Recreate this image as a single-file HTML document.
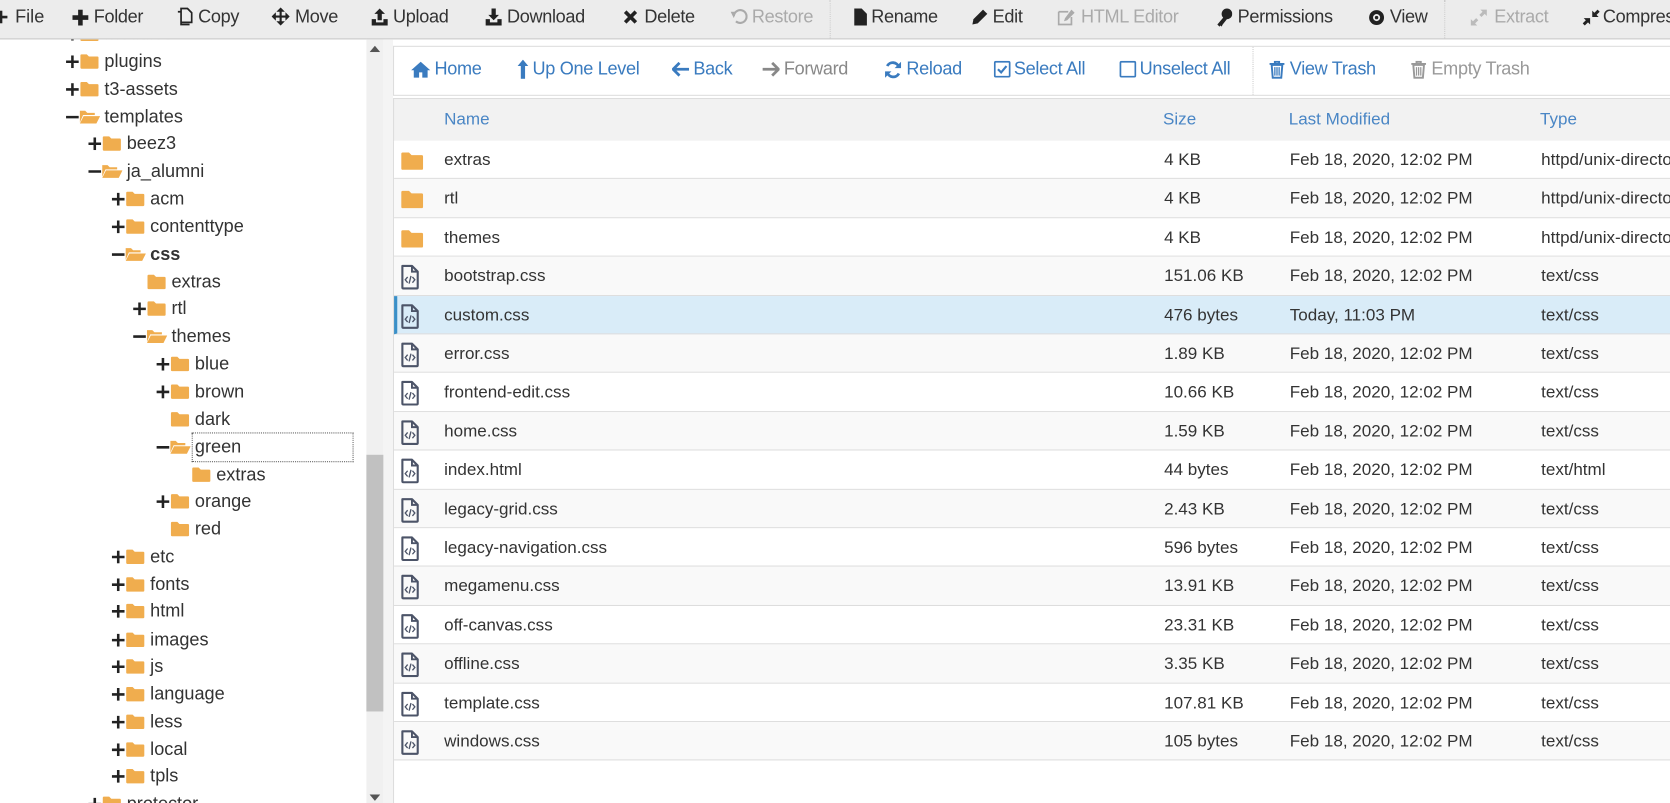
<!DOCTYPE html>
<html><head><meta charset="utf-8">
<style>
*{margin:0;padding:0;box-sizing:border-box}
html,body{width:1670px;height:803px;overflow:hidden;background:#fff}
#w{position:absolute;left:0;top:0;width:1568px;height:754px;transform:scale(1.06505);transform-origin:0 0;font-family:"Liberation Sans",sans-serif;overflow:hidden}
.a{position:absolute;white-space:nowrap}
#tb{position:absolute;left:0;top:0;width:1568px;height:37px;background:#ececec;border-bottom:1px solid #c9c9c9}
.ti{position:absolute;top:6px;font-size:17px;color:#333;letter-spacing:-0.3px;white-space:nowrap}
.ti svg{position:absolute;left:-20px;top:2px}
.dis{color:#aaa}
.sep{position:absolute;top:0;width:0;height:36px;border-left:1px dotted #ccc}
.tr{position:absolute;font-size:17px;color:#333;height:24px;line-height:26px;white-space:nowrap}
.tr svg{position:absolute;top:5px}
.nav{position:absolute;top:55px;font-size:17px;color:#3a7bbf;letter-spacing:-0.3px;white-space:nowrap}
.nav svg{position:absolute;left:-20px;top:2px}
.row{position:absolute;left:370px;width:1200px;height:36.4px;border-bottom:1px solid #ddd;font-size:16px;color:#333;white-space:nowrap}
.row span{position:absolute;top:10px;white-space:nowrap}
.row svg{position:absolute;left:6px;top:7px}
</style></head><body><div id="w">

<!-- toolbar -->
<div id="tb">
<div class="ti" style="left:12px"><svg width="14" height="14" viewBox="0 0 14 14" style="left:-11px"><path d="M5 0h4v5h5v4H9v5H5V9H0V5h5z" fill="#222"/></svg>File</div>
<div class="ti" style="left:88px"><svg width="15" height="15" viewBox="0 0 14 14"><path d="M5 0h4v5h5v4H9v5H5V9H0V5h5z" fill="#222"/></svg>Folder</div>
<div class="ti" style="left:186px"><svg width="15" height="17" viewBox="0 0 15 17"><path d="M4 1h6l4 4v9H4z M1 4h3v12h8" fill="none" stroke="#222" stroke-width="1.6"/></svg>Copy</div>
<div class="ti" style="left:277px"><svg width="17" height="17" viewBox="0 0 17 17" style="left:-22px"><path d="M8.5 0l4 4h-3v3.5h3.5v-3l4 4-4 4v-3H9.5V13h3l-4 4-4-4h3V9.5H4v3l-4-4 4-4v3h3.5V4h-3z" fill="#222"/></svg>Move</div>
<div class="ti" style="left:369px"><svg width="17" height="17" viewBox="0 0 17 17" style="left:-21px"><path d="M8.5 0l5 5h-3v6h-4V5h-3z M1 10h4v3h7v-3h4v6H1z" fill="#222"/></svg>Upload</div>
<div class="ti" style="left:476px"><svg width="17" height="17" viewBox="0 0 17 17" style="left:-21px"><path d="M6.5 0h4v6h3l-5 5-5-5h3z M1 10h4v3h7v-3h4v6H1z" fill="#222"/></svg>Download</div>
<div class="ti" style="left:605px"><svg width="14" height="14" viewBox="0 0 14 14" style="top:3px"><path d="M2 2l10 10M12 2L2 12" stroke="#222" stroke-width="3.4"/></svg>Delete</div>
<div class="ti dis" style="left:706px"><svg width="16" height="16" viewBox="0 0 16 16"><path d="M3 7a6 6 0 1 1 2 5" fill="none" stroke="#aaa" stroke-width="2"/><path d="M0 3l5 0 -2 6z" fill="#aaa"/></svg>Restore</div>
<div class="sep" style="left:779px"></div>
<div class="ti" style="left:818px"><svg width="12" height="16" viewBox="0 0 12 16" style="left:-16px"><path d="M0 0h7l5 5v11H0z" fill="#222"/></svg>Rename</div>
<div class="ti" style="left:932px"><svg width="16" height="16" viewBox="0 0 16 16"><path d="M11 1l4 4-9 9-5 1 1-5z" fill="#222"/></svg>Edit</div>
<div class="ti dis" style="left:1015px"><svg width="17" height="16" viewBox="0 0 17 16" style="left:-22px"><path d="M1 3h9M1 3v12h12V8" fill="none" stroke="#aaa" stroke-width="1.6"/><path d="M13 1l3 3-7 7-3 1 1-3z" fill="#aaa"/></svg>HTML Editor</div>
<div class="ti" style="left:1162px"><svg width="15" height="17" viewBox="0 0 15 17"><circle cx="10" cy="5" r="5" fill="#222"/><path d="M7 8l-6 7 2 2 1-1 1 1 1-2 4-5z" fill="#222"/></svg>Permissions</div>
<div class="ti" style="left:1305px"><svg width="17" height="17" viewBox="0 0 17 17" style="left:-21px"><circle cx="8.5" cy="8.5" r="7" fill="#222"/><circle cx="8.5" cy="8.5" r="3.3" fill="#ececec"/><circle cx="8.5" cy="8.5" r="1.6" fill="#222"/></svg>View</div>
<div class="sep" style="left:1356px"></div>
<div class="ti dis" style="left:1403px"><svg width="17" height="17" viewBox="0 0 17 17" style="left:-23px"><path d="M10 1h6v6l-2-2-3 3-2-2 3-3z M1 16v-6l2 2 3-3 2 2-3 3 2 2z" fill="#bbb"/></svg>Extract</div>
<div class="ti" style="left:1505px"><svg width="16" height="17" viewBox="0 0 16 17" style="left:-19px"><path d="M9 8V2l2 2 3-3 2 2-3 3 2 2z M7 9v6l-2-2-3 3-2-2 3-3-2-2z" fill="#222"/></svg>Compress</div>
</div>

<!-- left tree -->
<div class="a" style="left:344px;top:37px;width:16px;height:717px;background:#f0f0f0"></div>
<div class="a" style="left:344px;top:427px;width:16px;height:241px;background:#c1c1c1"></div>
<svg class="a" style="left:347px;top:43px" width="10" height="6"><path d="M0 6L5 0 10 6z" fill="#555"/></svg>
<svg class="a" style="left:347px;top:746px" width="10" height="6"><path d="M0 0L5 6 10 0z" fill="#555"/></svg>
<div class="a" style="left:360px;top:37px;width:9px;height:717px;background:#f4f4f4"></div>

<div class="a" style="left:180px;top:406px;width:152px;height:28px;border:1px dotted #666"></div>

<svg width="0" height="0" style="position:absolute">
<defs>
<symbol id="fc" viewBox="0 0 18 15"><path d="M1.5 1h5l2 2h8a1 1 0 0 1 1 1v9.5a1 1 0 0 1-1 1h-15a1 1 0 0 1-1-1v-11.5a1 1 0 0 1 1-1z" fill="#f0ad4e"/></symbol>
<symbol id="fo" viewBox="0 0 20 15"><path d="M1 2h5l2 2h7v2H4L1 13z" fill="#f0ad4e"/><path d="M4.5 7H20l-3.5 7H1z" fill="#f0ad4e"/></symbol>
<symbol id="pl" viewBox="0 0 12 12"><path d="M4.8 0h2.4v4.8H12v2.4H7.2V12H4.8V7.2H0V4.8h4.8z" fill="#222"/></symbol>
<symbol id="mi" viewBox="0 0 12 12"><path d="M0 4.8h12v2.4H0z" fill="#222"/></symbol>
<symbol id="fi" viewBox="0 0 20 26"><path d="M2 1.5h10l6 6V24a1 1 0 0 1-1 1H3a1 1 0 0 1-1-1z" fill="none" stroke="#4c5468" stroke-width="2.2" stroke-linejoin="round"/><path d="M12 1.5v6h6" fill="none" stroke="#4c5468" stroke-width="2"/><path d="M7.5 13l-2.5 3 2.5 3M12.5 13l2.5 3-2.5 3M11 12l-2 8" fill="none" stroke="#4c5468" stroke-width="1.4"/></symbol>
</defs></svg>

<div class="tr" style="left:98px;top:19px">modules<svg style="left:-23px" width="18" height="15"><use href="#fc"/></svg><svg style="left:-36px;top:7px" width="12" height="12"><use href="#pl"/></svg></div>
<div class="tr" style="left:98px;top:45px">plugins<svg style="left:-23px" width="18" height="15"><use href="#fc"/></svg><svg style="left:-36px;top:7px" width="12" height="12"><use href="#pl"/></svg></div>
<div class="tr" style="left:98px;top:71px">t3-assets<svg style="left:-23px" width="18" height="15"><use href="#fc"/></svg><svg style="left:-36px;top:7px" width="12" height="12"><use href="#pl"/></svg></div>
<div class="tr" style="left:98px;top:97px">templates<svg style="left:-24px" width="20" height="15"><use href="#fo"/></svg><svg style="left:-36px;top:7px" width="12" height="12"><use href="#mi"/></svg></div>
<div class="tr" style="left:119px;top:122px">beez3<svg style="left:-23px" width="18" height="15"><use href="#fc"/></svg><svg style="left:-36px;top:7px" width="12" height="12"><use href="#pl"/></svg></div>
<div class="tr" style="left:119px;top:148px">ja_alumni<svg style="left:-24px" width="20" height="15"><use href="#fo"/></svg><svg style="left:-36px;top:7px" width="12" height="12"><use href="#mi"/></svg></div>
<div class="tr" style="left:141px;top:174px">acm<svg style="left:-23px" width="18" height="15"><use href="#fc"/></svg><svg style="left:-36px;top:7px" width="12" height="12"><use href="#pl"/></svg></div>
<div class="tr" style="left:141px;top:200px">contenttype<svg style="left:-23px" width="18" height="15"><use href="#fc"/></svg><svg style="left:-36px;top:7px" width="12" height="12"><use href="#pl"/></svg></div>
<div class="tr" style="left:141px;top:226px;font-weight:bold">css<svg style="left:-24px" width="20" height="15"><use href="#fo"/></svg><svg style="left:-36px;top:7px" width="12" height="12"><use href="#mi"/></svg></div>
<div class="tr" style="left:161px;top:252px">extras<svg style="left:-23px" width="18" height="15"><use href="#fc"/></svg></div>
<div class="tr" style="left:161px;top:277px">rtl<svg style="left:-23px" width="18" height="15"><use href="#fc"/></svg><svg style="left:-36px;top:7px" width="12" height="12"><use href="#pl"/></svg></div>
<div class="tr" style="left:161px;top:303px">themes<svg style="left:-24px" width="20" height="15"><use href="#fo"/></svg><svg style="left:-36px;top:7px" width="12" height="12"><use href="#mi"/></svg></div>
<div class="tr" style="left:183px;top:329px">blue<svg style="left:-23px" width="18" height="15"><use href="#fc"/></svg><svg style="left:-36px;top:7px" width="12" height="12"><use href="#pl"/></svg></div>
<div class="tr" style="left:183px;top:355px">brown<svg style="left:-23px" width="18" height="15"><use href="#fc"/></svg><svg style="left:-36px;top:7px" width="12" height="12"><use href="#pl"/></svg></div>
<div class="tr" style="left:183px;top:381px">dark<svg style="left:-23px" width="18" height="15"><use href="#fc"/></svg></div>
<div class="tr" style="left:183px;top:407px">green<svg style="left:-24px" width="20" height="15"><use href="#fo"/></svg><svg style="left:-36px;top:7px" width="12" height="12"><use href="#mi"/></svg></div>
<div class="tr" style="left:203px;top:433px">extras<svg style="left:-23px" width="18" height="15"><use href="#fc"/></svg></div>
<div class="tr" style="left:183px;top:458px">orange<svg style="left:-23px" width="18" height="15"><use href="#fc"/></svg><svg style="left:-36px;top:7px" width="12" height="12"><use href="#pl"/></svg></div>
<div class="tr" style="left:183px;top:484px">red<svg style="left:-23px" width="18" height="15"><use href="#fc"/></svg></div>
<div class="tr" style="left:141px;top:510px">etc<svg style="left:-23px" width="18" height="15"><use href="#fc"/></svg><svg style="left:-36px;top:7px" width="12" height="12"><use href="#pl"/></svg></div>
<div class="tr" style="left:141px;top:536px">fonts<svg style="left:-23px" width="18" height="15"><use href="#fc"/></svg><svg style="left:-36px;top:7px" width="12" height="12"><use href="#pl"/></svg></div>
<div class="tr" style="left:141px;top:561px">html<svg style="left:-23px" width="18" height="15"><use href="#fc"/></svg><svg style="left:-36px;top:7px" width="12" height="12"><use href="#pl"/></svg></div>
<div class="tr" style="left:141px;top:588px">images<svg style="left:-23px" width="18" height="15"><use href="#fc"/></svg><svg style="left:-36px;top:7px" width="12" height="12"><use href="#pl"/></svg></div>
<div class="tr" style="left:141px;top:613px">js<svg style="left:-23px" width="18" height="15"><use href="#fc"/></svg><svg style="left:-36px;top:7px" width="12" height="12"><use href="#pl"/></svg></div>
<div class="tr" style="left:141px;top:639px">language<svg style="left:-23px" width="18" height="15"><use href="#fc"/></svg><svg style="left:-36px;top:7px" width="12" height="12"><use href="#pl"/></svg></div>
<div class="tr" style="left:141px;top:665px">less<svg style="left:-23px" width="18" height="15"><use href="#fc"/></svg><svg style="left:-36px;top:7px" width="12" height="12"><use href="#pl"/></svg></div>
<div class="tr" style="left:141px;top:691px">local<svg style="left:-23px" width="18" height="15"><use href="#fc"/></svg><svg style="left:-36px;top:7px" width="12" height="12"><use href="#pl"/></svg></div>
<div class="tr" style="left:141px;top:716px">tpls<svg style="left:-23px" width="18" height="15"><use href="#fc"/></svg><svg style="left:-36px;top:7px" width="12" height="12"><use href="#pl"/></svg></div>
<div class="tr" style="left:119px;top:742px">protector<svg style="left:-23px" width="18" height="15"><use href="#fc"/></svg><svg style="left:-36px;top:7px" width="12" height="12"><use href="#pl"/></svg></div>
<!-- re-cover top under toolbar -->
<div class="a" style="left:0;top:0;width:344px;height:37px;background:#ececec;border-bottom:1px solid #c9c9c9"></div>
<div class="a" style="left:0;top:6px;font-size:17px;color:#333;">&nbsp;&nbsp;&nbsp;File</div>
<svg class="a" style="left:-5px;top:10px" width="12" height="12"><use href="#pl"/></svg>
<div class="a" style="left:88px;top:6px;font-size:17px;color:#333;letter-spacing:-0.3px">Folder</div>
<svg class="a" style="left:68px;top:9px" width="15" height="15" viewBox="0 0 14 14"><path d="M5 0h4v5h5v4H9v5H5V9H0V5h5z" fill="#222"/></svg>
<div class="a" style="left:186px;top:6px;font-size:17px;color:#333;letter-spacing:-0.3px">Copy</div>
<svg class="a" style="left:166px;top:7px" width="15" height="17" viewBox="0 0 15 17"><path d="M4 1h6l4 4v9H4z M1 4h3v12h8" fill="none" stroke="#222" stroke-width="1.6"/></svg>
<div class="a" style="left:277px;top:6px;font-size:17px;color:#333;letter-spacing:-0.3px">Move</div>
<svg class="a" style="left:255px;top:7px" width="17" height="17" viewBox="0 0 17 17"><path d="M8.5 0l4 4h-3v3.5h3.5v-3l4 4-4 4v-3H9.5V13h3l-4 4-4-4h3V9.5H4v3l-4-4 4-4v3h3.5V4h-3z" fill="#222"/></svg>

<!-- nav bar -->
<div class="a" style="left:369px;top:43px;width:1210px;height:47px;border:1px solid #ddd;background:#fff"></div>
<div class="a" style="left:1176px;top:44px;height:45px;border-left:1px dotted #ccc"></div>
<div class="nav" style="left:408px"><svg width="18" height="16" viewBox="0 0 18 16" style="left:-22px"><path d="M9 1L0 9h2.5v7h5v-5h3v5h5V9H18z" fill="#3a7bbf"/></svg>Home</div>
<div class="nav" style="left:500px"><svg width="12" height="18" viewBox="0 0 12 18" style="left:-15px;top:1px"><path d="M6 0l5 6H8v12H4V6H1z" fill="#3a7bbf"/></svg>Up One Level</div>
<div class="nav" style="left:651px"><svg width="16" height="14" viewBox="0 0 16 14" style="top:3px"><path d="M7 1L1 7l6 6M1 7h15" fill="none" stroke="#3a7bbf" stroke-width="2.6"/></svg>Back</div>
<div class="nav" style="left:736px;color:#888"><svg width="16" height="14" viewBox="0 0 16 14" style="top:3px"><path d="M9 1l6 6-6 6M15 7H0" fill="none" stroke="#888" stroke-width="2.6"/></svg>Forward</div>
<div class="nav" style="left:851px"><svg width="17" height="17" viewBox="0 0 17 17" style="left:-21px"><path d="M14 6A6 6 0 0 0 3 5M3 11a6 6 0 0 0 11 1" fill="none" stroke="#3a7bbf" stroke-width="2.6"/><path d="M16 1v6h-6z M1 16v-6h6z" fill="#3a7bbf"/></svg>Reload</div>
<div class="nav" style="left:952px"><svg width="16" height="16" viewBox="0 0 16 16" style="left:-19px"><rect x="1" y="1" width="14" height="14" rx="1" fill="none" stroke="#3a7bbf" stroke-width="1.6"/><path d="M4 8l3 3 5-6" fill="none" stroke="#3a7bbf" stroke-width="2"/></svg>Select All</div>
<div class="nav" style="left:1070px"><svg width="16" height="16" viewBox="0 0 16 16" style="left:-19px"><rect x="1" y="1" width="14" height="14" rx="1" fill="none" stroke="#3a7bbf" stroke-width="1.6"/></svg>Unselect All</div>
<div class="nav" style="left:1211px"><svg width="14" height="17" viewBox="0 0 14 17" style="left:-19px"><path d="M0 3h14M5 3V1h4v2M2 4h10l-1 12H3z" fill="none" stroke="#3a7bbf" stroke-width="1.8"/><path d="M5 6v8M7 6v8M9 6v8" stroke="#3a7bbf" stroke-width="1.2"/></svg>View Trash</div>
<div class="nav" style="left:1344px;color:#999"><svg width="14" height="17" viewBox="0 0 14 17" style="left:-19px"><path d="M0 3h14M5 3V1h4v2M2 4h10l-1 12H3z" fill="none" stroke="#999" stroke-width="1.8"/><path d="M5 6v8M7 6v8M9 6v8" stroke="#999" stroke-width="1.2"/></svg>Empty Trash</div>

<!-- table -->
<div class="a" style="left:369px;top:92px;width:1210px;height:662px;border-left:1px solid #ddd"></div>
<div class="a" style="left:369px;top:92px;width:1210px;height:41px;background:#f2f2f2;border:1px solid #ddd;font-size:16px;color:#4a86c5">
<span class="a" style="left:47px;top:11px">Name</span><span class="a" style="left:722px;top:11px">Size</span><span class="a" style="left:840px;top:11px">Last Modified</span><span class="a" style="left:1076px;top:11px">Type</span></div>

<div class="row" style="top:132px;background:#fff"><svg width="22" height="18" style="left:6px;top:10px"><use href="#fc"/></svg><span style="left:47px">extras</span><span style="left:723px">4 KB</span><span style="left:841px">Feb 18, 2020, 12:02 PM</span><span style="left:1077px">httpd/unix-directory</span></div>
<div class="row" style="top:168.4px;background:#f9f9f9"><svg width="22" height="18" style="left:6px;top:10px"><use href="#fc"/></svg><span style="left:47px">rtl</span><span style="left:723px">4 KB</span><span style="left:841px">Feb 18, 2020, 12:02 PM</span><span style="left:1077px">httpd/unix-directory</span></div>
<div class="row" style="top:204.8px;background:#fff"><svg width="22" height="18" style="left:6px;top:10px"><use href="#fc"/></svg><span style="left:47px">themes</span><span style="left:723px">4 KB</span><span style="left:841px">Feb 18, 2020, 12:02 PM</span><span style="left:1077px">httpd/unix-directory</span></div>
<div class="row" style="top:241.2px;background:#f9f9f9"><svg width="18" height="24"><use href="#fi"/></svg><span style="left:47px">bootstrap.css</span><span style="left:723px">151.06 KB</span><span style="left:841px">Feb 18, 2020, 12:02 PM</span><span style="left:1077px">text/css</span></div>
<div class="row" style="top:277.6px;background:#d9ecf8;border-left:3px solid #3a8fc7"><svg width="18" height="24" style="left:3px"><use href="#fi"/></svg><span style="left:44px">custom.css</span><span style="left:720px">476 bytes</span><span style="left:838px">Today, 11:03 PM</span><span style="left:1074px">text/css</span></div>
<div class="row" style="top:314px;background:#f9f9f9"><svg width="18" height="24"><use href="#fi"/></svg><span style="left:47px">error.css</span><span style="left:723px">1.89 KB</span><span style="left:841px">Feb 18, 2020, 12:02 PM</span><span style="left:1077px">text/css</span></div>
<div class="row" style="top:350.4px;background:#fff"><svg width="18" height="24"><use href="#fi"/></svg><span style="left:47px">frontend-edit.css</span><span style="left:723px">10.66 KB</span><span style="left:841px">Feb 18, 2020, 12:02 PM</span><span style="left:1077px">text/css</span></div>
<div class="row" style="top:386.8px;background:#f9f9f9"><svg width="18" height="24"><use href="#fi"/></svg><span style="left:47px">home.css</span><span style="left:723px">1.59 KB</span><span style="left:841px">Feb 18, 2020, 12:02 PM</span><span style="left:1077px">text/css</span></div>
<div class="row" style="top:423.2px;background:#fff"><svg width="18" height="24"><use href="#fi"/></svg><span style="left:47px">index.html</span><span style="left:723px">44 bytes</span><span style="left:841px">Feb 18, 2020, 12:02 PM</span><span style="left:1077px">text/html</span></div>
<div class="row" style="top:459.6px;background:#f9f9f9"><svg width="18" height="24"><use href="#fi"/></svg><span style="left:47px">legacy-grid.css</span><span style="left:723px">2.43 KB</span><span style="left:841px">Feb 18, 2020, 12:02 PM</span><span style="left:1077px">text/css</span></div>
<div class="row" style="top:496px;background:#fff"><svg width="18" height="24"><use href="#fi"/></svg><span style="left:47px">legacy-navigation.css</span><span style="left:723px">596 bytes</span><span style="left:841px">Feb 18, 2020, 12:02 PM</span><span style="left:1077px">text/css</span></div>
<div class="row" style="top:532.4px;background:#f9f9f9"><svg width="18" height="24"><use href="#fi"/></svg><span style="left:47px">megamenu.css</span><span style="left:723px">13.91 KB</span><span style="left:841px">Feb 18, 2020, 12:02 PM</span><span style="left:1077px">text/css</span></div>
<div class="row" style="top:568.8px;background:#fff"><svg width="18" height="24"><use href="#fi"/></svg><span style="left:47px">off-canvas.css</span><span style="left:723px">23.31 KB</span><span style="left:841px">Feb 18, 2020, 12:02 PM</span><span style="left:1077px">text/css</span></div>
<div class="row" style="top:605.2px;background:#f9f9f9"><svg width="18" height="24"><use href="#fi"/></svg><span style="left:47px">offline.css</span><span style="left:723px">3.35 KB</span><span style="left:841px">Feb 18, 2020, 12:02 PM</span><span style="left:1077px">text/css</span></div>
<div class="row" style="top:641.6px;background:#fff"><svg width="18" height="24"><use href="#fi"/></svg><span style="left:47px">template.css</span><span style="left:723px">107.81 KB</span><span style="left:841px">Feb 18, 2020, 12:02 PM</span><span style="left:1077px">text/css</span></div>
<div class="row" style="top:678px;background:#f9f9f9"><svg width="18" height="24"><use href="#fi"/></svg><span style="left:47px">windows.css</span><span style="left:723px">105 bytes</span><span style="left:841px">Feb 18, 2020, 12:02 PM</span><span style="left:1077px">text/css</span></div>

</div></body></html>
